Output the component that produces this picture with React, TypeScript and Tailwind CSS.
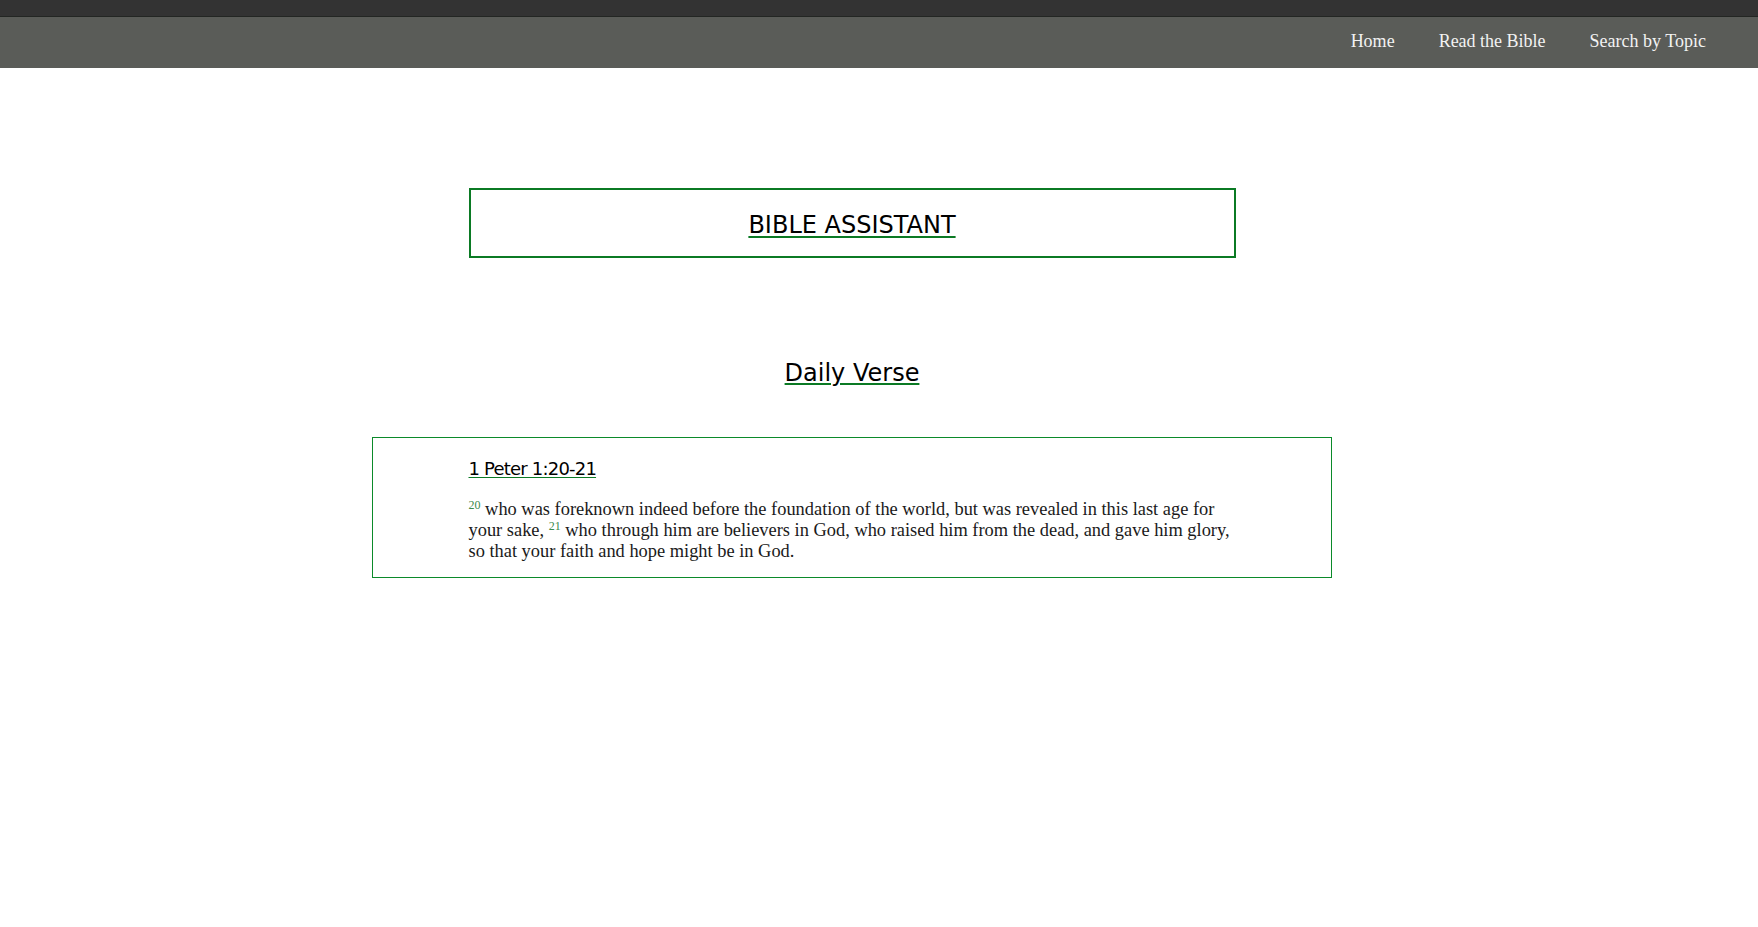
const navLinks = ["Home", "Read the Bible", "Search by Topic"];

const serif = "font-['Liberation_Serif',serif]";
const heading = "font-['DejaVu_Sans',sans-serif]";

const VerseNum = ({ n }: { n: number }) => (
  <sup className="text-[12px] leading-none text-[#3b8a4c]">{n}</sup>
);

const App = () => {
  return (
    <div className="min-h-[927px] bg-white">
      <div className="h-[17px] bg-[#333333] border-b border-[#232623]" />
      <nav className="h-[51px] bg-[#5a5c58] flex items-center justify-end gap-[44px] pr-[52px]">
        {navLinks.map((link) => (
          <a
            key={link}
            href="#"
            className={`${serif} text-[18px] text-[#f2f2f2] leading-none -mt-[3px]`}
          >
            {link}
          </a>
        ))}
      </nav>

      <main className="w-[1704px] flex flex-col items-center">
        <div className="mt-[120px] w-[767px] h-[70px] border-2 border-[#0b7a24] flex items-center justify-center">
          <h1
            className={`${heading} text-[24px] text-black underline decoration-[#0b7a24] decoration-2 underline-offset-[3px] pt-[3px]`}
          >
            BIBLE ASSISTANT
          </h1>
        </div>

        <h2
          className={`${heading} mt-[97px] text-[24px] text-black underline decoration-[#0b7a24] decoration-2 underline-offset-[2px]`}
        >
          Daily Verse
        </h2>

        <section className="mt-[46px] w-[960px] border border-[#0b8a2a] pt-[17px] pb-[15px]">
          <div className="w-[767px] mx-auto">
            <h3
              className={`${heading} text-[18px] text-black underline decoration-[#0b7a24] underline-offset-[2px] tracking-[-0.8px]`}
            >
              1 Peter 1:20-21
            </h3>
            <p className={`${serif} mt-[17px] text-[18.4px] leading-[21px] text-[#1a1a1a]`}>
              <VerseNum n={20} /> who was foreknown indeed before the foundation of the world, but was revealed in this last age for your sake,{" "}
              <VerseNum n={21} /> who through him are believers in God, who raised him from the dead, and gave him glory, so that your faith and hope might be in God.
            </p>
          </div>
        </section>
      </main>
    </div>
  );
};

export default App;
